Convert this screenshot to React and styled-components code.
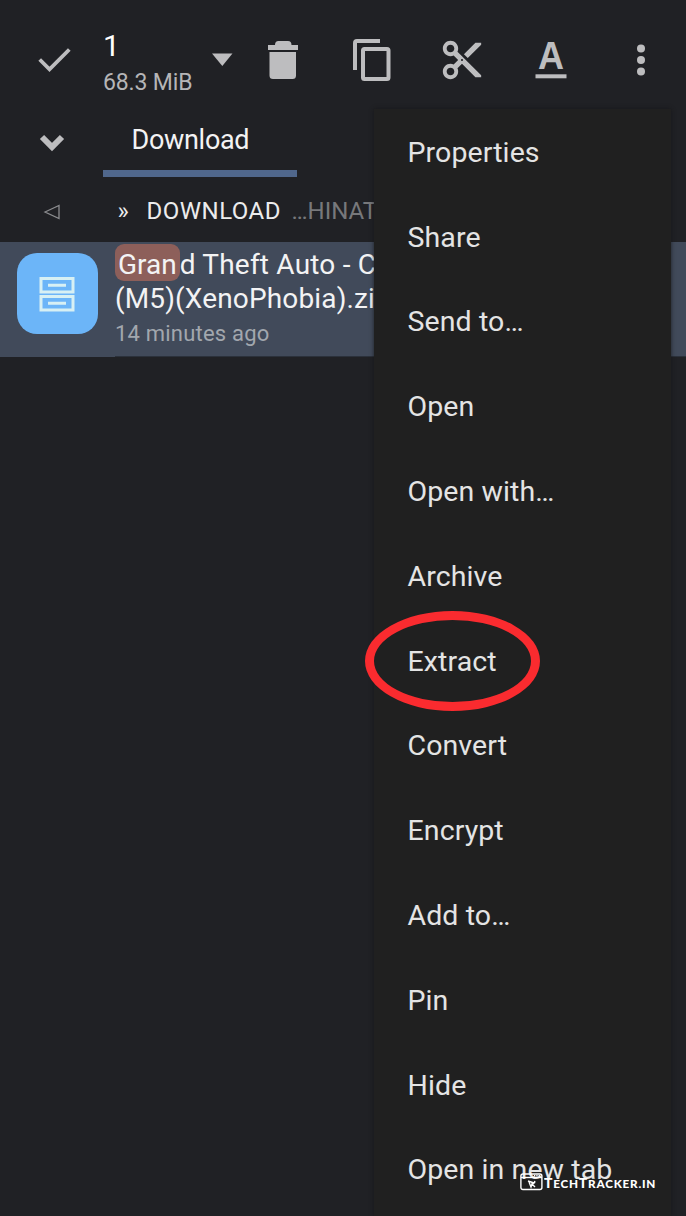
import React from "react";
import styled, { createGlobalStyle } from "styled-components";

const Global = createGlobalStyle`
  * { box-sizing: border-box; }
  body { margin: 0; background: #202125; }
`;

const Screen = styled.main`
  position: relative;
  width: 686px;
  height: 1216px;
  overflow: hidden;
  background: #202125;
  color: #f3f3f4;
  font-family: Roboto, "Liberation Sans", sans-serif;
  white-space: nowrap;
  svg { display: block; }
`;

const Toolbar = styled.header`
  display: flex;
  align-items: center;
  height: 120px;
  color: #bdbdbf;
`;

const Lead = styled.div`
  display: flex;
  justify-content: center;
  flex: none;
  width: 103px;
  padding-left: ${(p) => p.$shift || 0}px;
  padding-bottom: ${(p) => p.$raise || 0}px;
`;

const Selection = styled.div`
  width: 104px;
  flex: none;
`;

const Count = styled.div`
  height: 37px;
  margin-top: 8px;
  font-size: 30px;
  line-height: 36px;
  color: #fff;
`;

const Size = styled.div`
  height: 36px;
  font-size: 23px;
  line-height: 36px;
  letter-spacing: -0.15px;
  color: #b5b5b7;
`;

const Caret = styled.div`
  width: 31px;
  padding-left: 4px;
`;

const ToolButton = styled.button`
  display: flex;
  align-items: center;
  justify-content: center;
  width: 89.5px;
  height: 100%;
  padding: 0;
  border: 0;
  background: none;
  color: inherit;
`;

const Tabs = styled.nav`
  display: flex;
  align-items: center;
  height: 57px;
`;

const Tab = styled.div`
  width: 194px;
  height: 57px;
  padding-left: 28.5px;
  border-bottom: 7px solid #50678c;
  font-size: 27px;
  line-height: 41px;
  letter-spacing: -0.3px;
`;

const Path = styled.div`
  display: flex;
  align-items: center;
  height: 65px;
  padding-top: 3px;
`;

const Crumb = styled.span`
  flex: none;
  width: ${(p) => p.$width}px;
  padding-left: ${(p) => p.$pad || 0}px;
  letter-spacing: ${(p) => p.$ls || 0}px;
  font-size: 24px;
  color: ${(p) => (p.$dim ? "#77787b" : "#ececed")};
`;

const FileRow = styled.article`
  display: flex;
  height: 115px;
  background: #414a5a;
`;

const FileIcon = styled.div`
  display: flex;
  align-items: center;
  justify-content: center;
  flex: none;
  width: 81px;
  height: 81px;
  margin: 11px 17px 0;
  padding-right: 1px;
  border-radius: 20px;
  background: #6cb5f8;
`;

const FileInfo = styled.div`
  padding-top: 6px;
  border-bottom: 1px solid #2b313b;
  flex: 1;
`;

const FileName = styled.div`
  height: 34px;
  font-size: 28px;
  line-height: 34px;
  letter-spacing: ${(p) => p.$ls || 0}px;
`;

const Match = styled.mark`
  display: inline-block;
  height: 37px;
  margin-top: -4px;
  padding: 4px 3px 0;
  border-radius: 9px;
  vertical-align: top;
  line-height: 34px;
  letter-spacing: 0;
  background: #8d5f5a;
  color: inherit;
`;

const Age = styled.div`
  height: 36px;
  font-size: 22px;
  line-height: 35px;
  letter-spacing: 0.2px;
  color: #a2a7ae;
`;

const Menu = styled.ul`
  position: absolute;
  left: 374px;
  top: 109px;
  width: 297px;
  height: 1107px;
  margin: 0;
  padding: 1px 0 0 33.5px;
  overflow: hidden;
  list-style: none;
  background: #202020;
  box-shadow: 0 0 4px rgba(20, 20, 22, 0.8);
`;

const MenuItem = styled.li`
  display: flex;
  align-items: center;
  height: 84.8px;
  font-size: 28.5px;
  letter-spacing: 0.1px;
  color: #e4e4e4;
`;

const Ring = styled.div`
  position: absolute;
  left: 365px;
  top: 611px;
  width: 175px;
  height: 100px;
  border: 9px solid #fa2b2f;
  border-radius: 50%;
`;

const Watermark = styled.div`
  position: absolute;
  left: 520px;
  top: 1173px;
  display: flex;
  align-items: center;
  height: 18px;
  color: #fff;
  font-family: Lato, sans-serif;
  font-weight: 900;
  font-size: 10.5px;
  line-height: 18px;
  letter-spacing: 0.7px;
`;

const Brand = styled.span`
  margin: 3px 0 0 1px;
  transform: scaleX(1.115);
  transform-origin: left;
  big { font-size: 12.5px; }
`;

const items = [
  "Properties", "Share", "Send to…", "Open", "Open with…", "Archive", "Extract",
  "Convert", "Encrypt", "Add to…", "Pin", "Hide", "Open in new tab",
];

const CheckIcon = () => (
  <svg width="33" height="26" viewBox="0 0 33 26" fill="none" stroke="currentColor" strokeWidth="3.800">
    <path d="M1.700 12.500 11.500 22.300 31.300 2.500" />
  </svg>
);

const TrashIcon = () => (
  <svg width="48" height="48" fill="currentColor">
    <path d="M9 9h7q0-4 3.500-4h9.500q3.500 0 3.500 4h6.500v5H9zM10.500 16H37v23.500q0 3.500-3.500 3.500H14q-3.500 0-3.500-3.500z" />
  </svg>
);

const CopyIcon = () => (
  <svg width="48" height="48" fill="none" stroke="currentColor" strokeWidth="4">
    <path d="M7 34V7q0-2 2-2h23" />
    <rect x="15" y="13" width="25.500" height="30" rx="1.500" />
  </svg>
);

const CutIcon = () => (
  <svg width="46" height="46" viewBox="0 0 24 24" fill="currentColor">
    <path d="M9.640 7.640c.23-.5.36-1.050.36-1.640 0-2.210-1.790-4-4-4S2 3.790 2 6s1.790 4 4 4c.59 0 1.140-.13 1.640-.36L10 12l-2.360 2.360C7.140 14.130 6.590 14 6 14c-2.210 0-4 1.790-4 4s1.790 4 4 4 4-1.790 4-4c0-.59-.13-1.140-.36-1.640L12 14l7 7h3v-1L9.640 7.640zM6 8c-1.100 0-2-.89-2-2s.9-2 2-2 2 .89 2 2-.9 2-2 2zm0 12c-1.100 0-2-.89-2-2s.9-2 2-2 2 .89 2 2-.9 2-2 2zm6-7.500c-.28 0-.5-.22-.5-.5s.22-.5.5-.5.5.22.5.5-.22.5-.5.5zM19 3l-6 6 2 2 7-7V3z" />
  </svg>
);

const RenameIcon = () => (
  <svg width="48" height="64" fill="currentColor">
    <text x="24" y="41" fontSize="39" fontWeight="700" textAnchor="middle" textLength="26" lengthAdjust="spacingAndGlyphs">A</text>
    <rect x="8.500" y="46.300" width="31" height="4" />
  </svg>
);

const MoreIcon = () => (
  <svg width="48" height="48" fill="currentColor">
    <circle cx="24" cy="12.500" r="4" />
    <circle cx="24" cy="24" r="4" />
    <circle cx="24" cy="35.500" r="4" />
  </svg>
);

const CabinetIcon = () => (
  <svg width="36" height="36" fill="none" stroke="#d7f0f4" strokeWidth="3">
    <rect x="2" y="2.500" width="32" height="13.500" />
    <rect x="2" y="20.500" width="32" height="13.500" />
    <path d="M9 9.300h18M9 27.300h18" />
  </svg>
);

const BrandIcon = () => (
  <svg width="23" height="18" fill="none" stroke="currentColor" strokeWidth="1.400">
    <rect x="0.900" y="1" width="21" height="15.500" rx="2" />
    <path d="M1 4.500h21" />
    <path d="m8 8 6 2-2 1 3 3m-6-5 2 5 1-3M15 8l-1 2" />
    <path d="M14 2.700h6" strokeDasharray="1.300 1" />
  </svg>
);

export default function App() {
  return (
    <Screen>
      <Global />
      <Toolbar>
        <Lead $shift={5}><CheckIcon /></Lead>
        <Selection>
          <Count>1</Count>
          <Size>68.3 MiB</Size>
        </Selection>
        <Caret>
          <svg width="22" height="14" fill="currentColor"><path d="M1 0.500h20.500L11.300 13z" /></svg>
        </Caret>
        {[TrashIcon, CopyIcon, CutIcon, RenameIcon, MoreIcon].map((Icon, i) => (
          <ToolButton key={i}><Icon /></ToolButton>
        ))}
      </Toolbar>
      <Tabs>
        <Lead $raise={11}>
          <svg width="26" height="20" viewBox="0 0 26 20" fill="none" stroke="#bdbdbf" strokeWidth="6">
            <path d="m3 4 10 10L23 4" />
          </svg>
        </Lead>
        <Tab>Download</Tab>
      </Tabs>
      <Path>
        <Lead>
          <svg width="18" height="18" fill="none" stroke="#8b8c8f" strokeWidth="1.300">
            <path d="M2 10 16 3.500v13z" />
          </svg>
        </Lead>
        <Crumb $width={43.500} $pad={14.500}>»</Crumb>
        <Crumb $width={145} $ls={0.5}>DOWNLOAD</Crumb>
        <Crumb $dim $width={200}>…HINATA</Crumb>
      </Path>
      <FileRow>
        <FileIcon><CabinetIcon /></FileIcon>
        <FileInfo>
          <FileName $ls={0.2}><Match>Gran</Match>d Theft Auto - Chinatown</FileName>
          <FileName $ls={0.15}>(M5)(XenoPhobia).zip</FileName>
          <Age>14 minutes ago</Age>
        </FileInfo>
      </FileRow>
      <Menu>
        {items.map((label) => <MenuItem key={label}>{label}</MenuItem>)}
      </Menu>
      <Ring />
      <Watermark>
        <BrandIcon />
        <Brand><big>T</big>ECH<big>T</big>RACKER.IN</Brand>
      </Watermark>
    </Screen>
  );
}
